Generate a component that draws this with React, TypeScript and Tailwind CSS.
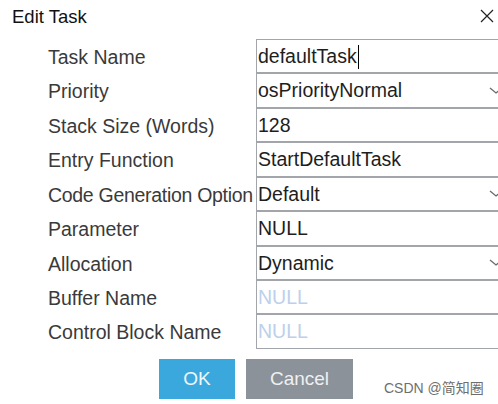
import React from 'react';

type Row = {
  label: string;
  value: string;
  h: string;
  dropdown?: boolean;
  placeholder?: boolean;
  caret?: boolean;
  tight?: boolean;
};

const rows: Row[] = [
  { label: 'Task Name', value: 'defaultTask', h: 'h-[34px]', caret: true },
  { label: 'Priority', value: 'osPriorityNormal', h: 'h-[35px]', dropdown: true },
  { label: 'Stack Size (Words)', value: '128', h: 'h-[34px]' },
  { label: 'Entry Function', value: 'StartDefaultTask', h: 'h-[35px]' },
  { label: 'Code Generation Option', value: 'Default', h: 'h-[34px]', dropdown: true, tight: true },
  { label: 'Parameter', value: 'NULL', h: 'h-[35px]' },
  { label: 'Allocation', value: 'Dynamic', h: 'h-[34px]', dropdown: true },
  { label: 'Buffer Name', value: 'NULL', h: 'h-[34px]', placeholder: true },
  { label: 'Control Block Name', value: 'NULL', h: 'h-[35px]', placeholder: true },
];

const Chevron = () => (
  <svg className="absolute left-[232px] top-1/2 -translate-y-1/2" width="14" height="8" viewBox="0 0 14 8">
    <polyline points="1,1 7,6 13,1" fill="none" stroke="#6b6b6b" strokeWidth="1.3" />
  </svg>
);

export default function App() {
  return (
    <div
      className="relative w-[498px] h-[404px] overflow-hidden bg-white"
      style={{ fontFamily: '"Liberation Sans", Arial, sans-serif' }}
    >
      {/* title bar */}
      <div className="flex items-start justify-between h-[39px] pl-3 pr-[3px] pt-[7px]">
        <span className="text-[18.5px] leading-[20px] text-[#111]">Edit Task</span>
        <svg className="mt-[2px] mr-[1px]" width="14" height="14" viewBox="0 0 14 14">
          <path d="M1 1 L13 13 M13 1 L1 13" stroke="#222" strokeWidth="1.2" fill="none" />
        </svg>
      </div>

      {/* form */}
      <div className="flex flex-col pl-[48px]">
        {rows.map((r) => (
          <div key={r.label} className={`flex ${r.h}`}>
            <div
              className={`w-[208px] shrink-0 flex items-center pt-[3px] text-[19.5px] leading-none text-[#3a3a3a] whitespace-nowrap ${
                r.tight ? 'tracking-[-0.3px]' : ''
              }`}
            >
              {r.label}
            </div>
            <div className="relative flex-1 -mr-[4px] flex items-center border border-[#a2a6ab] bg-white pl-[1px] pt-[1px]">
              <span
                className={`text-[19.5px] leading-none whitespace-nowrap ${
                  r.placeholder ? 'text-[#bcd0ea]' : 'text-[#1e1e1e]'
                }`}
              >
                {r.value}
              </span>
              {r.caret && <span className="ml-[1px] h-[24px] border-l border-black" />}
              {r.dropdown && <Chevron />}
            </div>
          </div>
        ))}
      </div>

      {/* buttons */}
      <div className="flex gap-[11px] pl-[159px] mt-[10px]">
        <button className="w-[76px] h-[40px] bg-[#3aa8dc] text-[19px] text-[#eef7fc]">OK</button>
        <button className="w-[107px] h-[40px] bg-[#8b9299] text-[19px] text-[#eef0f2]">Cancel</button>
      </div>

      {/* watermark */}
      <div
        className="absolute left-[384px] top-[380px] text-[14px] leading-[16px] text-[#6e6e6e]"
        style={{ fontFamily: '"Liberation Sans", "Noto Sans CJK SC", sans-serif' }}
      >
        CSDN @简知圈
      </div>
    </div>
  );
}
